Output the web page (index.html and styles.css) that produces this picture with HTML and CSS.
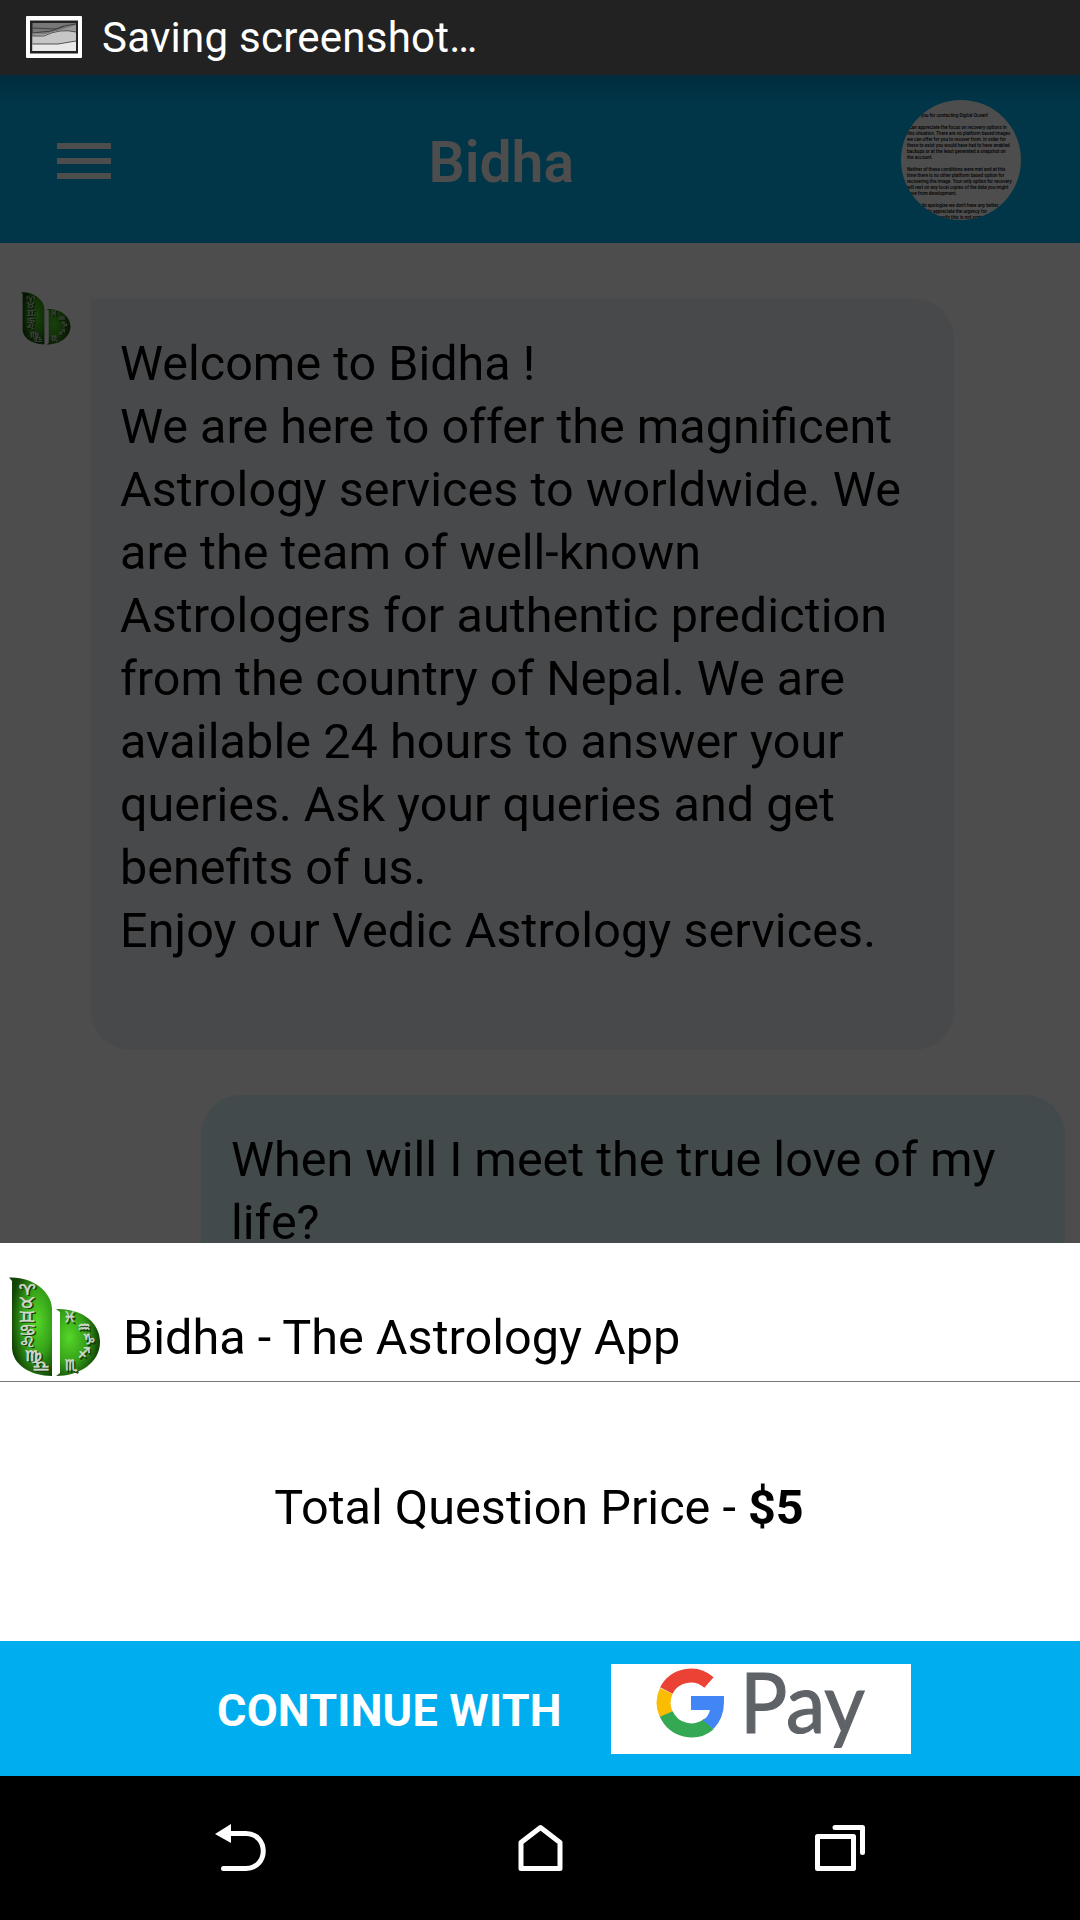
FILE: index.html
```html
<!DOCTYPE html>
<html lang="en">
<head>
<meta charset="utf-8">
<title>Bidha</title>
<link rel="stylesheet" href="styles.css">
</head>
<body>
<svg class="defs" width="0" height="0">
  <defs>
    <radialGradient id="leafA" cx="0.66" cy="0.45" r="0.62">
      <stop offset="0" stop-color="#55d628"/><stop offset="0.55" stop-color="#35a018"/><stop offset="1" stop-color="#124505"/>
    </radialGradient>
    <radialGradient id="leafB" cx="0.3" cy="0.42" r="0.72">
      <stop offset="0" stop-color="#55d628"/><stop offset="0.55" stop-color="#35a018"/><stop offset="1" stop-color="#0e3a04"/>
    </radialGradient>
    <g id="signs">
      <g transform="scale(1.350 1)">
        <text x="13.500" y="18">♈</text><text x="13.500" y="31">♉</text><text x="13.500" y="45">♊</text><text x="13.500" y="58">♋</text><text x="13.500" y="70">♌</text><text x="18" y="84">♍</text><text x="24" y="94">♎</text>
      </g>
      <text x="61" y="45">♓</text><text x="75" y="55">♒</text><text x="80" y="67">♑</text><text x="75" y="81">♐</text><text x="62" y="93">♏</text>
    </g>
    <symbol id="bidha" viewBox="0 0 92 100">
      <path d="M0 0.500C22 -1 43 14 43 32V99C22 99 3 88 3 70V4Z" fill="url(#leafA)"/>
      <path d="M47 32C72 31 91 45 91 65C91 86 70 99 47 99L51 96V35Z" fill="url(#leafB)"/>
      <g class="zodiac shade" transform="translate(1.500 1.500)"><use href="#signs"/></g>
      <g class="zodiac"><use href="#signs"/></g>
    </symbol>
  </defs>
</svg>
<div class="phone">
  <div class="status">
    <svg class="status-icon" viewBox="0 0 57 43">
      <rect x="0" y="0" width="56" height="42" rx="1" fill="#fff"/>
      <rect x="4" y="4.500" width="48" height="33" fill="#222"/>
      <rect x="6.500" y="7" width="43.500" height="28" fill="#777"/>
      <path d="M6.500 17L20 18L34 14L50 9V35H6.500Z" fill="#999"/>
      <path d="M6.500 20L18 19Q34 12 50 16V35H6.500Z" fill="#c6c6c6"/>
      <path d="M6.500 28L32 28L50 25V35H6.500Z" fill="#e8e8e8"/>
      <path d="M6.500 12L30 13Q38 9 50 8M6.500 17L25 15L38 10M6.500 20H18Q34 12 50 16M6.500 28H32L50 25" fill="none" stroke="#333" stroke-width="0.800"/>
    </svg>
    <span class="status-text">Saving screenshot…</span>
  </div>
  <header class="appbar">
    <div class="menu"><i></i><i></i><i></i></div>
    <h1>Bidha</h1>
    <div class="avatar">
      <p>Thank you for contacting Digital Ocean!</p>
      <p>I can appreciate the focus on recovery options in<br>this situation. There are no platform based images<br>we can offer for you to recover from. In order for<br>these to exist you would have had to have enabled<br>backups or at the least generated a snapshot on<br>the account.</p>
      <p>Neither of these conditions were met and at this<br>time there is no other platform based option for<br>recovering the image. Your only option for recovery<br>will rest on any local copies of the data you might<br>have from development.</p>
      <p class="indent">I do apologize we don't have any better<br>We do appreciate the urgency for<br>situation, sadly this is not something</p>
    </div>
  </header>
  <main class="chat">
    <div class="row">
      <svg class="bot" viewBox="0 0 92 100" preserveAspectRatio="none"><use href="#bidha"/></svg>
      <div class="bubble bubble-in">Welcome to Bidha !<br>We are here to offer the magnificent<br><span class="loose">Astrology services to worldwide. We</span><br>are the team of well-known<br><span class="loose">Astrologers for authentic prediction</span><br>from the country of Nepal. We are<br><span class="loose">available 24 hours to answer your</span><br>queries. Ask your queries and get<br>benefits of us.<br><span class="loose">Enjoy our Vedic Astrology services.</span></div>
    </div>
    <div class="bubble bubble-out">When will I meet the true love of my<br>life?</div>
  </main>
  <section class="sheet">
    <div class="sheet-head">
      <svg class="logo" viewBox="0 0 92 100" preserveAspectRatio="none"><use href="#bidha"/></svg>
      <span class="app-name">Bidha - The Astrology App</span>
    </div>
    <div class="price"><span>Total Question Price - <b>$5</b></span></div>
    <div class="pay">
      <span class="pay-label">CONTINUE WITH</span>
      <svg class="gpay" viewBox="0 0 300 90">
        <rect width="300" height="90" fill="#fff"/>
        <g fill="none" stroke-width="14">
          <path d="M55.300 26.500A27.500 27.500 0 0 1 98 18.500" stroke="#ea4335"/>
          <path d="M55.300 50.500A27.500 27.500 0 0 1 55.300 27" stroke="#fbbc04"/>
          <path d="M55.300 50A27.500 27.500 0 0 0 98 60" stroke="#34a853"/>
        </g>
        <path d="M80 32H113V38Q113 54 102.500 65L92 56.500Q97.500 52.500 99 46H80Z" fill="#4285f4"/>
        <text class="pay-text" x="129" y="69" textLength="125" lengthAdjust="spacingAndGlyphs">Pay</text>
      </svg>
    </div>
  </section>
  <nav class="nav">
    <svg viewBox="0 0 52 48"><path d="M0 10L16 0V19Z" fill="#fff"/><path d="M14 9.500H31C54 10 54 44 31 44.500H8.500" fill="none" stroke="#fff" stroke-width="5" stroke-linecap="round"/></svg>
    <svg viewBox="0 0 52 48"><path d="M6 44.500V18.500L25.500 3.500L45 18.500V44.500Z" fill="none" stroke="#fff" stroke-width="5" stroke-linejoin="round"/></svg>
    <svg viewBox="0 0 52 48"><path d="M3.500 12.500H39.500V44.500H3.500ZM21 3.500H48.500V28.500" fill="none" stroke="#fff" stroke-width="5" stroke-linejoin="round" stroke-linecap="round"/></svg>
  </nav>
</div>
</body>
</html>
```
FILE: styles.css
```css
* { box-sizing: border-box; }
body { margin: 0; font-family: Roboto, "Liberation Sans", sans-serif; }
.defs { position: absolute; }
.phone { width: 1080px; height: 1920px; display: flex; flex-direction: column; overflow: hidden; background: #4d4d4d; }
.status { height: 75px; flex: none; background: #222; display: flex; align-items: center; padding-left: 26px; gap: 19px; }
.status-icon { width: 57px; height: 43px; }
.status-text { color: #fff; font-size: 42px; letter-spacing: 0.25px; }
.appbar { height: 168px; flex: none; background: linear-gradient(#002c3e, #003648 30px); display: flex; align-items: center; justify-content: space-between; padding: 0 59px 0 57px; color: #4d4d4d; }
.menu { width: 54px; display: flex; flex-direction: column; gap: 9px; padding-top: 4px; }
.menu i { height: 6px; background: #4d4d4d; }
h1 { margin: 6px 0 0; width: 155px; font-size: 57px; font-weight: 600; white-space: nowrap; }
.avatar { width: 120px; height: 120px; margin-top: 2px; border-radius: 50%; background: #4d4d4d; overflow: hidden; color: #000; font-size: 4.6px; line-height: 6px; font-weight: 500; padding: 13px 0 0 6px; white-space: nowrap; }
.avatar p { margin: 0 0 6px; }
.avatar .indent { padding-left: 12px; }
.chat { height: 1000px; flex: none; overflow: hidden; display: flex; flex-direction: column; gap: 45px; font-size: 48.5px; line-height: 63px; color: #000; white-space: nowrap; }
.row { display: flex; padding: 49px 0 0 21px; }
.bot { width: 50px; height: 53px; filter: brightness(0.3); }
.bubble { padding: 33px 0 0 29px; width: 863px; flex: none; }
.bubble-in { height: 751px; margin: 7px 0 0 20px; background: #48494b; border-radius: 0 40px 40px 40px; }
.bubble-out { height: 260px; width: 864px; margin-left: 201px; padding-left: 30px; background: #424a4c; border-radius: 40px; }
.loose { letter-spacing: 0.09px; }
.sheet { height: 533px; flex: none; background: #fff; color: #000; font-size: 48.6px; display: flex; flex-direction: column; }
.sheet-head { height: 139px; border-bottom: 1px solid #777; display: flex; align-items: flex-start; padding: 34px 0 0 9px; gap: 22px; }
.logo { width: 92px; height: 100px; }
.app-name { margin-top: 33px; line-height: 56px; }
.price { flex: 1; display: flex; justify-content: center; align-items: center; padding: 0 2px 9px 0; }
.price b { font-weight: 700; }
.pay { height: 135px; background: #00aef0; color: #fff; display: flex; align-items: center; padding-left: 217px; }
.pay-label { width: 394px; padding-top: 3px; font-size: 45px; letter-spacing: 0.2px; font-weight: 700; white-space: nowrap; }
.gpay { width: 300px; height: 90px; }
.pay-text { font-family: Lato, sans-serif; font-size: 83px; fill: #5f6368; stroke: #5f6368; stroke-width: 1.2px; }
.nav { flex: 1; background: #000; display: flex; justify-content: space-between; padding: 48px 214px 0 215px; }
.nav svg { width: 52px; height: 48px; }
.zodiac { font-family: "DejaVu Sans", sans-serif; font-size: 14.5px; text-anchor: middle; fill: #d4d8d2; stroke: #d4d8d2; stroke-width: 0.5px; }
.shade { fill: #123d08; stroke: #123d08; }
```
